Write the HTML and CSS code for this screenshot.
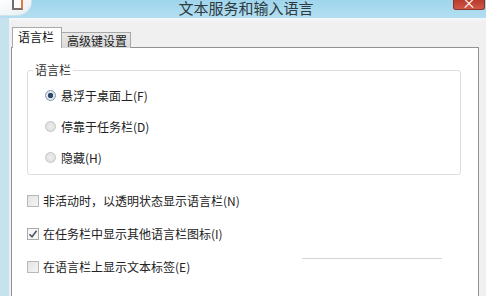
FILE: index.html
```html
<!DOCTYPE html>
<html lang="zh-CN">
<head>
    <meta charset="UTF-8">
    <title>文本服务和输入语言</title>
    <link rel="stylesheet" href="styles.css">
</head>
<body>
    <div class="window">
        <div class="titlebar">
            <div class="app-icon"><span class="app-square"></span></div>
            <div class="title">文本服务和输入语言</div>
            <div class="close-btn"><span>×</span></div>
        </div>
        <div class="frame">
            <div class="client">
                <div class="tabs">
                    <div class="tab active">语言栏</div>
                    <div class="tab">高级键设置</div>
                </div>
                <div class="panel">
                    <fieldset class="group">
                        <legend>语言栏</legend>
                        <label class="radio-row"><span class="radio checked"></span>悬浮于桌面上(F)</label>
                        <label class="radio-row"><span class="radio"></span>停靠于任务栏(D)</label>
                        <label class="radio-row"><span class="radio"></span>隐藏(H)</label>
                    </fieldset>
                    <div class="checks">
                        <label class="check-row"><span class="checkbox"></span>非活动时，以透明状态显示语言栏(N)</label>
                        <label class="check-row"><span class="checkbox checked">
                            <svg width="10" height="10" viewBox="0 0 10 10"><path d="M1.5 5.2 L4 7.8 L8.6 1.8" fill="none" stroke="#4a5566" stroke-width="1.6"/></svg>
                        </span>在任务栏中显示其他语言栏图标(I)</label>
                        <label class="check-row"><span class="checkbox"></span>在语言栏上显示文本标签(E)</label>
                    </div>
                    <div class="smudge"></div>
                </div>
            </div>
        </div>
    </div>
</body>
</html>
```

FILE: styles.css
```css
body {
    margin: 0;
    background: #ffffff;
    font-family: "Noto Sans CJK SC", "Liberation Sans", sans-serif;
    color: #222;
}
.window {
    width: 486px;
    height: 296px;
    display: flex;
    flex-direction: column;
    overflow: hidden;
}
.titlebar {
    height: 18px;
    flex-shrink: 0;
    display: grid;
    grid-template-columns: 1fr auto 1fr;
    align-items: start;
    background: linear-gradient(to bottom, #9fd5ec, #b3def1);
    overflow: hidden;
}
.app-icon {
    width: 31px;
    height: 15px;
    background: linear-gradient(to bottom right, #ffffff, #e6eef1);
    border-right: 1px solid #d3e2ea;
    border-bottom: 1px solid #d3e2ea;
    border-bottom-right-radius: 16px 14px;
    position: relative;
}
.app-square {
    position: absolute;
    left: 12px;
    top: -2px;
    width: 7px;
    height: 8px;
    border: 2px solid #6e6e6e;
    border-right-color: #e3793a;
    border-bottom-color: #7a6f6a;
    background: #fdfdfd;
}
.title {
    font-size: 15px;
    line-height: 16px;
    color: #2e3a40;
    white-space: nowrap;
    padding-left: 6px;
}
.close-btn {
    justify-self: end;
    width: 30px;
    height: 9px;
    margin-right: 1px;
    background: linear-gradient(to bottom, #b83b2c, #d2574a);
    border: 1px solid #8a3328;
    border-top: none;
    border-radius: 0 0 3px 3px;
    color: #fff;
    text-align: center;
    font-size: 14px;
    line-height: 5px;
    overflow: hidden;
}
.frame {
    flex: 1;
    display: flex;
    border-left: 9px solid #c6e2ee;
    background: #f0f0f0;
}
.client {
    flex: 1;
    display: flex;
    flex-direction: column;
    padding: 10px 7px 0 2px;
    background: linear-gradient(to bottom, #f5f8f9 0, #f0f0f0 4px);
}
.tabs {
    display: flex;
    align-items: flex-end;
    height: 20px;
    padding-left: 1px;
    margin-bottom: -1px;
    position: relative;
    z-index: 1;
}
.tab {
    font-size: 12px;
    line-height: 15px;
    height: 15px;
    padding: 0 3px 0 5px;
    background: linear-gradient(to bottom, #e8e8e8, #d9d9d9);
    border: 1px solid #a8a8a8;
    border-left: none;
    border-bottom: none;
    color: #222;
}
.tab.active {
    height: 20px;
    line-height: 18px;
    padding: 0 7px 0 5px;
    background: #fff;
    border-left: 1px solid #a8a8a8;
    color: #111;
}
.panel {
    flex: 1;
    background: #fff;
    border: 1px solid #8f9296;
    border-bottom: none;
    padding: 15px 0 0 15px;
    position: relative;
}
.group {
    width: 434px;
    box-sizing: border-box;
    margin: 0;
    padding: 3px 0 1px 0;
    border: 1px solid #dedede;
    border-radius: 3px;
}
.group legend {
    font-size: 12px;
    line-height: 14px;
    padding: 0 2px;
    margin-left: 5px;
    color: #333;
}
.radio-row, .check-row {
    display: flex;
    align-items: center;
    font-size: 12px;
    color: #222;
}
.radio-row {
    height: 31px;
    gap: 5px;
    padding-left: 17px;
}
.radio {
    width: 9px;
    height: 9px;
    border-radius: 50%;
    border: 1px solid #c4c4c4;
    background: radial-gradient(circle, #ededed, #dcdcdc);
}
.radio.checked {
    border-color: #8a9bb0;
    background: radial-gradient(circle, #2f4866 0, #2f4866 2.5px, #dfe7ef 3px, #d0d8e0 100%);
}
.checks {
    margin-top: 9px;
}
.check-row {
    height: 33px;
    gap: 4px;
}
.checkbox {
    width: 10px;
    height: 10px;
    border: 1px solid #b8b8b8;
    background: linear-gradient(to bottom right, #e4e4e4, #f4f4f4);
    display: flex;
    align-items: center;
    justify-content: center;
}
.checkbox.checked {
    border-color: #a9a9a9;
    background: #f6f6f6;
}
/* faint line left in the screenshot over the empty area */
.smudge {
    position: absolute;
    left: 290px;
    top: 210px;
    width: 140px;
    height: 1px;
    background: #d4d4d4;
}
```
